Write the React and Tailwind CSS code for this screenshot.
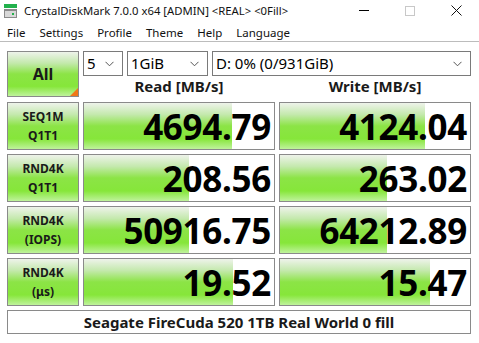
import React from "react";

const font = { fontFamily: '"Noto Sans", "Open Sans", sans-serif' };

function Chevron() {
  return (
    <svg width="9" height="6" viewBox="0 0 9 6" className="shrink-0">
      <path d="M0.5 0.8 L4.5 4.8 L8.5 0.8" fill="none" stroke="#555" strokeWidth="1" />
    </svg>
  );
}

function Select({ w, text }) {
  return (
    <div className={`${w} h-[25px] border border-[#7a7a7a] bg-white flex items-center justify-between pl-[3px] pr-[8px] text-[15px] text-black leading-none`}>
      <span>{text}</span>
      <Chevron />
    </div>
  );
}

function Label({ a, b }) {
  return (
    <div className="w-[72px] h-[48px] border border-[#8a8a8a] bg-[linear-gradient(to_bottom,#eef3ea_0%,#c4e9ad_25%,#8ce446_50%,#86e63a_78%,#bff39c_100%)] flex flex-col items-center justify-center text-[12px] font-bold text-[#1a1a1a] leading-[19px]">
      <span>{a}</span>
      <span>{b}</span>
    </div>
  );
}

function Cell({ value, pct }) {
  return (
    <div className="relative w-[192px] h-[48px] border border-[#8a8a8a] bg-white overflow-hidden">
      <div
        className="absolute left-0 top-0 bottom-0 bg-[linear-gradient(to_bottom,#eef3ea_0%,#c4e9ad_25%,#8ce446_50%,#86e63a_78%,#bff39c_100%)]"
        style={{ width: `${pct}%` }}
      />
      <div className="relative h-full flex items-center justify-end pr-[3px] text-[35px] font-bold text-black leading-none tracking-[-0.3px]">
        {value}
      </div>
    </div>
  );
}

const rows = [
  { a: "SEQ1M", b: "Q1T1", r: "4694.79", rp: 78, w: "4124.04", wp: 76.5 },
  { a: "RND4K", b: "Q1T1", r: "208.56", rp: 55.5, w: "263.02", wp: 56.5 },
  { a: "RND4K", b: "(IOPS)", r: "50916.75", rp: 55.5, w: "64212.89", wp: 56.5 },
  { a: "RND4K", b: "(μs)", r: "19.52", rp: 78.5, w: "15.47", wp: 79 },
];

export default function App() {
  return (
    <div className="w-[479px] h-[343px] bg-white overflow-hidden text-black" style={font}>
      {/* title bar */}
      <div className="h-[21px] flex items-center relative">
        <svg width="16" height="16" viewBox="0 0 16 16" className="ml-[2px] mt-[1px]">
          <rect x="2" y="1" width="13" height="4" fill="#22b14c" />
          <rect x="2" y="6" width="13" height="9" fill="#8a8a8a" />
          <rect x="3" y="8" width="11" height="6" fill="#d8d8d8" />
          <rect x="10" y="10" width="2" height="2" fill="#22b14c" />
        </svg>
        <span className="ml-[6px] text-[11.3px] leading-none text-[#111]">CrystalDiskMark 7.0.0 x64 [ADMIN] &lt;REAL&gt; &lt;0Fill&gt;</span>
        <div className="absolute right-0 top-0 h-[21px] flex items-center">
          <div className="w-[46px] h-[21px] flex items-center justify-center">
            <div className="w-[10px] h-px bg-black" />
          </div>
          <div className="w-[46px] h-[21px] flex items-center justify-center">
            <div className="w-[10px] h-[10px] border border-[#c8c8c8]" />
          </div>
          <div className="w-[46px] h-[21px] flex items-center justify-center">
            <svg width="11" height="11" viewBox="0 0 11 11">
              <path d="M0.5 0.5 L10.5 10.5 M10.5 0.5 L0.5 10.5" stroke="#111" strokeWidth="1" />
            </svg>
          </div>
        </div>
      </div>
      {/* menu bar */}
      <div className="h-[21px] flex items-center pt-[3px] pl-[7px] gap-[14px] text-[11.5px] leading-none text-[#111] border-b border-[#bcbcbc]">
        <span>File</span>
        <span>Settings</span>
        <span>Profile</span>
        <span>Theme</span>
        <span>Help</span>
        <span>Language</span>
      </div>
      {/* content */}
      <div className="pl-[7px] pt-[9px] flex flex-col gap-[4px]">
        <div className="flex gap-[4px] mb-[1px]">
          <div className="relative w-[72px] h-[46px] border border-[#8a8a8a] bg-[linear-gradient(to_bottom,#eef3ea_0%,#c4e9ad_25%,#8ce446_50%,#86e63a_78%,#bff39c_100%)] flex items-center justify-center text-[16px] font-bold text-[#1a1a1a]">
            All
            <div className="absolute right-0 bottom-0 w-0 h-0 border-l-[8px] border-l-transparent border-b-[8px] border-b-[#f07818]" />
          </div>
          <div className="flex flex-col w-[388px]">
            <div className="flex gap-[4px]">
              <Select w="w-[40px]" text="5" />
              <Select w="w-[81px]" text="1GiB" />
              <Select w="w-[259px]" text="D: 0% (0/931GiB)" />
            </div>
            <div className="flex gap-[4px] h-[21px] items-center text-[15px] font-bold text-[#1a1a1a] leading-none">
              <div className="w-[192px] text-center">Read [MB/s]</div>
              <div className="w-[192px] text-center">Write [MB/s]</div>
            </div>
          </div>
        </div>
        {rows.map((row, i) => (
          <div key={i} className="flex gap-[4px]">
            <Label a={row.a} b={row.b} />
            <Cell value={row.r} pct={row.rp} />
            <Cell value={row.w} pct={row.wp} />
          </div>
        ))}
        <div className="w-[464px] h-[24px] border border-[#8a8a8a] flex items-center justify-center text-[15px] font-bold text-[#1a1a1a] leading-none">
          Seagate FireCuda 520 1TB Real World 0 fill
        </div>
      </div>
    </div>
  );
}
